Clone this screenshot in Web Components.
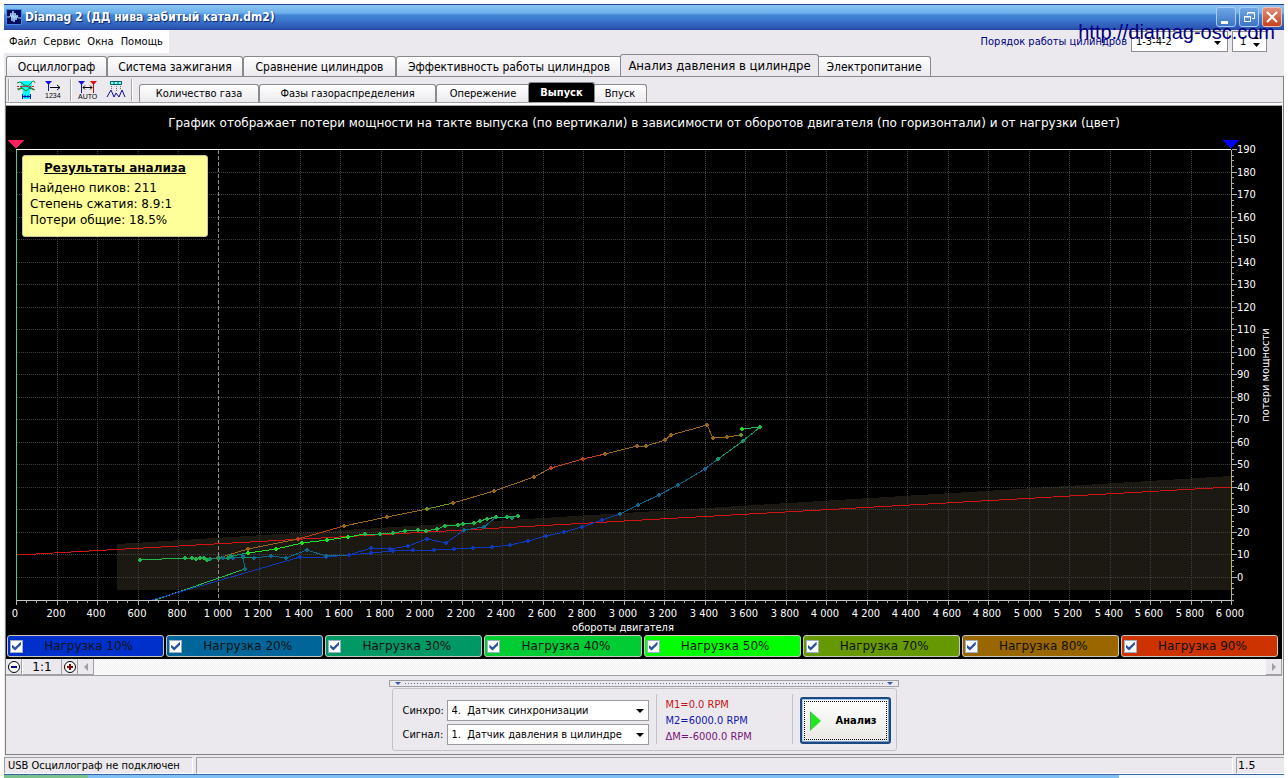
<!DOCTYPE html>
<html lang="ru">
<head>
<meta charset="utf-8">
<title>Diamag 2</title>
<style>
html { background: #fff; }
body { margin: 0; color: #000; font: 11px/16px "DejaVu Sans Condensed", "DejaVu Sans", sans-serif; --face: #ebe9ed; --line: #8a8a8e; --ui: "DejaVu Sans Condensed", "DejaVu Sans", sans-serif; --wide: "DejaVu Sans", sans-serif; }
</style>
</head>
<body>
<dm-app></dm-app>
<script>
const define = (name, html, setup) => {
  const tpl = document.createElement('template');
  tpl.innerHTML = '<style>*{box-sizing:border-box}button,select,input{font:inherit;color:inherit;margin:0}:host{display:block;box-sizing:border-box}</style>' + html;
  customElements.define(name, class extends HTMLElement {
    constructor() {
      super();
      this.attachShadow({ mode: 'open' }).append(tpl.content.cloneNode(true));
    }
    connectedCallback() {
      if (setup && !this.ready) { this.ready = true; setup(this, this.shadowRoot); }
    }
  });
};

define('dm-titlebar', `
<style>
:host { height: 26px; display: flex; align-items: center; gap: 3px; padding: 0 2px; border-top: 1px solid #1f4a94; border-bottom: 1px solid #24479b;
  background: linear-gradient(#8cc4f2 0, #6cb0ec 8px, #4585d6 10px, #3c7cd0 14px, #2e59b8 22px, #2c50ae 100%); }
h1 { flex: 1; margin: 0; color: #fff; font: bold 12px/20px "DejaVu Sans Condensed", sans-serif; text-shadow: 1px 1px 1px #0a246a; white-space: nowrap; }
.buttons { display: flex; gap: 3px; }
button { width: 20px; height: 20px; padding: 0; border: 1px solid #a9cdf3; border-radius: 3px; background: linear-gradient(#6fa6e4, #3c74c8); display: grid; place-items: center; }
button.close { background: linear-gradient(#e0907c, #c8401c); border-color: #f0c0b0; }
svg { display: block; }
</style>
<svg width="16" height="16" viewBox="0 0 16 16" aria-hidden="true"><rect width="16" height="16" fill="#4a86e8"/><rect x="1" y="1" width="14" height="14" fill="#000c5c"/><path d="M1 8h3l1-4 1 8 1-10 1 11 1-9 1 7 1-5 1 3h3" fill="none" stroke="#b4d8ff" stroke-width="1"/></svg>
<h1><slot></slot></h1>
<div class="buttons">
<button type="button" aria-label="Свернуть"><svg width="16" height="16"><path d="M3 12h7v3H3z" fill="#fff"/></svg></button>
<button type="button" aria-label="Восстановить"><svg width="16" height="16"><path d="M6.500 6V3.500h7v6H11M6 4h8" fill="none" stroke="#fff"/><path d="M3.500 7.500h6v5h-6zM3 8h7" fill="none" stroke="#fff"/></svg></button>
<button type="button" class="close" aria-label="Закрыть"><svg width="16" height="16"><path d="M3 3l10 10M13 3L3 13" stroke="#fff" stroke-width="2"/></svg></button>
</div>`);

define('dm-menubar', `
<style>
:host { display: flex; justify-content: space-between; align-items: flex-start; height: 24px; position: relative; }
nav { display: flex; gap: 7px; background: #fff; height: 23px; padding: 0 6px 0 5px; align-items: center; }
button { border: 0; background: none; padding: 0; line-height: 16px; }
form { display: flex; gap: 4px; margin: 1px 17px 0 0; height: 21px; align-items: center; }
label { color: #000080; }
.box { position: relative; height: 21px; }
.box svg { position: absolute; right: 6px; top: 0; pointer-events: none; }
select, input { height: 21px; border: 1px solid #8e8e92; background: #fff; padding: 0 8px 0 4px; border-radius: 0; appearance: none; display: block; }
select { width: 97px; } input { width: 35px; padding: 0 0 0 7px; appearance: textfield; }
input::-webkit-inner-spin-button { display: none; }
a { position: absolute; right: 9px; top: -10px; color: #000080; text-decoration: none; font: 20px/24px "Liberation Sans", sans-serif; }
</style>
<nav><button type="button">Файл</button><button type="button">Сервис</button><button type="button">Окна</button><button type="button">Помощь</button></nav>
<form><label for="o">Порядок работы цилиндров</label>
<div class="box"><select id="o"><option>1-3-4-2</option></select><svg width="8" height="21"><path d="M0 10h7l-3.500 4z"/></svg></div>
<div class="box"><input id="n" type="number" value="1" aria-label="Номер цилиндра"><svg width="8" height="21"><path d="M0 12h7l-3.500 4zM1 8h5L3.500 5z"/></svg></div></form>
<a href="http://diamag-osc.com">http://diamag-osc.com</a>`);

define('dm-tab', `
<style>
:host { flex: none; }
button { display: block; width: 100%; height: 100%; padding: 0; border: 1px solid var(--line); border-bottom: 0; border-radius: 3px 3px 0 0; background: linear-gradient(#fff, #ebe9ed); white-space: nowrap; }
:host([active]) { position: relative; margin: -2px -2px 0; }
:host([active]) button { background: var(--active, var(--face)); color: var(--active-ink, #000); font-weight: var(--active-weight, normal); font-size: var(--active-size, inherit); }
</style><button type="button" role="tab"><slot></slot></button>`, (host, root) => {
  host.style.width = host.getAttribute('width') + 'px';
  root.querySelector('button').setAttribute('aria-selected', host.hasAttribute('active'));
});

define('dm-tabs', `
<style>
:host { display: flex; align-items: stretch; height: 20px; }
</style><slot></slot>`);

define('dm-toolbar', `
<style>
:host { display: flex; align-items: center; height: 25px; }
i { width: 2px; height: 22px; background: #a2a2a6; border-right: 1px solid #fff; }
button { border: 0; padding: 0; background: none; display: block; }
svg { display: block; }
.a { display: flex; gap: 8px; padding: 0 8px 0 6px; }
.b { padding: 0 5px 0 6px; }
.g { margin-left: 2px; }
</style>
<i class="g"></i>
<div class="a">
<button type="button" aria-label="Фазы"><svg width="20" height="20"><path d="M5 1h11v7l-2 3v8H7v-8L5 8z" fill="#00ffff"/><path d="M1 3q3-2 5 0t4 3 5-3 4 0" fill="none" stroke="#008040"/><path d="M1 9q3 0 5-2t4-1 5 2 4 2" fill="none" stroke="#606060"/><path d="M1 6.500h18" stroke="#e02020" stroke-dasharray="2 1"/><path d="M2 10l4-2 4 3 4-3 4 2" stroke="#008000" fill="none"/><path d="M6.500 14v5M14.500 14v5M7 16.500h8M9 15v3M12 15v3" stroke="#0018c0"/></svg></button>
<button type="button" aria-label="Нумерация"><svg width="18" height="20"><path d="M1 1h7L4.500 5z" fill="#1010f0"/><path d="M4.500 4v7" stroke="#1010c0"/><path d="M6 7.500h10M13 5l3 2.500L13 10" fill="none" stroke="#000"/><text x="1" y="18" font-family="Liberation Sans" font-size="7">1234</text></svg></button>
</div><i></i>
<div class="a b">
<button type="button" aria-label="Авто"><svg width="20" height="20"><path d="M0 1h7L3.500 5z" fill="#1010f0"/><path d="M12 1h7l-3.500 4z" fill="#e01010"/><path d="M3.500 4v9" stroke="#1010c0"/><path d="M15.500 4v9" stroke="#c01010"/><path d="M5 7.500h9M7 5.500l-2 2 2 2M12 5.500l2 2-2 2" fill="none" stroke="#000"/><text x="0" y="19" font-family="Liberation Sans" font-size="7">AUTO</text></svg></button>
<button type="button" aria-label="Пики"><svg width="20" height="20"><path d="M4.500 1.500h11v3h-11z" fill="#80ffff" stroke="#006060"/><path d="M8 2v2M12 2v2" stroke="#006060"/><path d="M5.500 6v4M10.500 6v6M14.500 6v4" stroke="#707070" stroke-dasharray="1 1"/><path d="M1 17l4-7 3 7 2-4 3 4 3-7 3 7" fill="none" stroke="#101090"/></svg></button>
</div><i></i>
<slot></slot>`);

/* Losses chart. Points are kept in the units of the drawing's viewBox. */
const COLORS = { b: '#1038b8', t: '#106890', g: '#10986a', G: '#20b848', L: '#20e020', o: '#709818', a: '#986818', r: '#c04018' };
const SERIES = [
  'G155,600 L245,569', 'b152,600 b300,557 b326,557 b349,555 b371,553 b393,551 b413,550 b434,550 b454,549 b473,548 b492,547 b510,545 b528,541 b546,536 b564,532 b582,527 b602,520 t620,514 t638,505 t659,495 t678,485 t705,469 g718,459 g743,441 G760,427 L742,429',
  'b349,555 b371,548 b390,549 b408,546 b427,539 b446,543 t464,530 t484,527 t496,517 g512,518',
  't223,558 t233,558 g243,557 t254,558 t271,556 t286,558 t307,550 t326,556 b349,555',
  't243,556 t245,569',
  'a218,558 a248,549 r298,539 a344,526 a387,517 o427,509 a453,503 a494,491 a534,477 r551,468 r583,459 a605,454 a637,446 a646,446 a665,440 a671,435 a707,425 a713,438 a727,437 o741,435',
  'G140,560 G185,558 G192,558 G196,559 G200,558 G204,558 G207,560 g210,559 g219,558 g228,558 g231,556 L248,553 L276,549 L302,543 L327,540 L348,537 G365,534 G380,534 G393,533 G405,531 G418,530 G426,531 G437,529 G445,526 G458,525 G463,524 G474,523 G480,521 G487,519 G496,517 G507,517 G518,516'
];
define('dm-chart', `
<style>
:host { position: relative; background: #000; color: #fff; padding-top: 8px; }
h2 { margin: 0; text-align: center; font: 12px/18px var(--wide); }
svg { display: block; width: 100%; height: auto; font: 11px var(--ui); }
aside { position: absolute; left: 16px; top: 49px; width: 186px; height: 82px; padding: 4px 7px; border: 1px solid #c8c8a0; border-radius: 3px; background: #ffff99; color: #000; font: 12px/16px var(--wide); white-space: nowrap; }
h3 { margin: 0 0 4px; font: bold 12px/16px var(--wide); text-align: center; text-decoration: underline; }
p { margin: 0; }
</style>
<h2>График отображает потери мощности на такте выпуска (по вертикали) в зависимости от оборотов двигателя (по горизонтали) и от нагрузки (цвет)</h2>
<svg viewBox="6 132 1276 502" shape-rendering="crispEdges"></svg>
<aside><h3>Результаты анализа</h3><p>Найдено пиков: 211</p><p>Степень сжатия: 8.9:1</p><p>Потери общие: 18.5%</p></aside>`, (host, root) => {
  let s = '<path d="M117 544L1231 476V590H117z" fill="#1c1812"/>';
  const X = r => Math.round(16 + r * 0.2025), Y = v => Math.round(577 - v * 2.2526);
  let grid = '', tx = '', labels = '';
  for (let r = 0; r <= 6000; r += 50) {
    const x = X(r) + 0.5, major = r % 200 === 0;
    if (major) {
      if (r && r < 6000 && r !== 1000) grid += `M${x} 151V600`;
      labels += `<text x="${X(r) - 1}" y="617" text-anchor="middle">${r >= 1000 ? Math.floor(r / 1000) + ' ' + String(r % 1000).padStart(3, '0') : r}</text>`;
    }
    tx += `M${x} 600v${major ? 5 : 3}`;
  }
  for (let v = -10; v <= 190; v += 2.5) {
    const y = Y(v) + 0.5, major = v % 10 === 0 && v >= 0;
    if (major) {
      if (v < 190) grid += `M17 ${y}H1231`;
      labels += `<text x="1237" y="${Y(v) + 4}">${v}</text>`;
    }
    tx += `M1232 ${y}h${major ? 5 : 2}`;
  }
  s += `<path d="${grid}" stroke="#404040" stroke-dasharray="1 1" fill="none"/><path d="M218.500 150V600" stroke="#909090" stroke-dasharray="4 2"/>`;
  s += '<path d="M18 555L1231 487" stroke="#d01414" stroke-width="1"/>';
  let dots = '';
  SERIES.forEach((line, i) => {
    const pts = line.split(' ').map(p => [p[0], ...p.slice(1).split(',').map(Number)]);
    pts.forEach(([c, x, y], k) => {
      if (k) s += `<path d="M${pts[k - 1][1]} ${pts[k - 1][2]}L${x} ${y}" stroke="${COLORS[pts[k - 1][0]]}"/>`;
      if (y < 600 && !(i === 0)) dots += `<path d="M${x - 1} ${y - 2}h2v1h1v2h-1v1h-2v-1h-1v-2h1z" fill="${COLORS[c]}"/>`;
    });
  });
  s += dots + `<path d="M16 149.500H1231" stroke="#fff"/><path d="M16.500 150V600" stroke="#40c8a0"/><path d="M1231.500 150V600" stroke="#b8b860"/><path d="M16 600.500H1232" stroke="#c8c8c8"/><path d="${tx}" stroke="#b0b0b0"/>`;
  s += '<path d="M8 140h16l-8 9z" fill="#ff2060"/><path d="M1223 140h16l-8 9z" fill="#0000ff"/>';
  s += `<g fill="#fff">${labels}<text x="623" y="631" text-anchor="middle">обороты двигателя</text><text transform="translate(1269 375) rotate(-90)" text-anchor="middle">потери мощности</text></g>`;
  root.querySelector('svg').innerHTML = s;
});

define('dm-load', `
<style>
:host { display: block; min-width: 0; }
label { display: grid; grid-template-columns: 16px 1fr; align-items: center; height: 22px; padding: 0 12px 0 2px; border: 1px solid #c8c8b8; border-radius: 3px; background: var(--c); font: 12px/16px var(--wide); color: #101010; text-align: center; white-space: nowrap; }
input { appearance: none; width: 13px; height: 13px; background: #fff; border: 1px solid #9ab0c8; display: grid; place-items: center; }
input:checked::after { content: ""; width: 9px; height: 9px; background: #2a50a0; clip-path: polygon(0 35%, 35% 65%, 100% 0, 100% 35%, 35% 100%, 0 70%); }
</style><label><input type="checkbox" checked><span><slot></slot></span></label>`, host => host.style.setProperty('--c', host.getAttribute('color')));

define('dm-legend', `
<style>:host { display: grid; grid-template-columns: repeat(8, minmax(0, 1fr)); gap: 2px; background: #000; padding: 1px 4px 2px 1px; }</style><slot></slot>`);

define('dm-zoombar', `
<style>
:host { display: flex; height: 17px; border-bottom: 1px solid #a0a0a4; background: #fff; }
button, output { display: grid; place-items: center; width: 16px; height: 16px; padding: 0; border: 0; border-right: 1px solid #a0a0a4; border-bottom: 1px solid #a0a0a4; background: #ebe9ed; }
output { width: 40px; border-left: 1px solid #fff; font: 12px/14px var(--wide); }
.track { flex: 1; background: conic-gradient(#fff 25%, #efeef0 0 50%, #fff 0 75%, #efeef0 0) 0 0 / 2px 2px; }
svg { display: block; }
</style>
<button type="button" aria-label="Уменьшить"><svg width="14" height="14"><circle cx="7" cy="7" r="5.500" fill="#fff" stroke="#000"/><path d="M4 7h6" stroke="#000080" stroke-width="2"/></svg></button>
<output>1:1</output>
<button type="button" aria-label="Увеличить"><svg width="14" height="14"><circle cx="7" cy="7" r="5.500" fill="#fff" stroke="#000"/><path d="M4 7h6M7 4v6" stroke="#900000" stroke-width="2"/></svg></button>
<button type="button" aria-label="Влево"><svg width="14" height="14"><path d="M9 3v8L5 7z" fill="#a0a0a4"/></svg></button>
<div class="track"></div>
<button type="button" aria-label="Вправо"><svg width="14" height="14"><path d="M5 3v8l4-4z" fill="#a0a0a4"/></svg></button>`);

define('dm-panel', `
<style>
:host { display: flex; flex-direction: column; align-items: center; padding: 4px 0 3px; }
.split { display: flex; align-items: center; justify-content: space-between; width: 510px; height: 7px; padding: 0 5px; border: 1px solid #a0a0a4; }
.split i { border: 3px solid transparent; border-top: 3px solid #3058a0; border-bottom: 0; }
.split b { flex: 1; margin: 0 4px; height: 1px; background: repeating-linear-gradient(90deg, #5070b0 0 1px, transparent 1px 3px); }
.group { display: flex; width: 505px; height: 63px; margin-top: 1px; padding: 5px 5px 5px 10px; border: 1px solid #c4c2c8; border-radius: 3px; }
.fields { display: grid; grid-template-columns: 44px 202px; grid-auto-rows: 21px; gap: 3px 0; padding-top: 6px; align-items: center; }
.box { position: relative; }
.box svg { position: absolute; right: 5px; top: 0; pointer-events: none; }
select { display: block; width: 100%; height: 21px; appearance: none; border: 1px solid #9a9a9e; border-radius: 0; background: #fff; padding: 0 4px; white-space: pre; }
.marks { width: 137px; margin-left: 7px; padding: 3px 0 0 9px; border: solid #c4c2c8; border-width: 0 1px; height: 50px; }
.marks div { line-height: 16px; }
.run { width: 91px; height: 47px; margin: 3px 0 0 7px; padding: 2px; border: 2px solid #1c4880; border-radius: 3px; background: linear-gradient(#fff, #e8e8e2); font-weight: bold; box-shadow: inset -1px -1px #7ca0d0, inset 1px 1px #a0c8f0; }
.run span { display: flex; height: 39px; align-items: center; gap: 15px; padding-left: 5px; border: 1px dotted #000; }
</style>
<div class="split"><i></i><b></b><i></i></div>
<div class="group">
<div class="fields">
<label for="s">Синхро:</label><div class="box"><select id="s"><option>4.&nbsp; Датчик синхронизации</option></select><svg width="8" height="21"><path d="M0 9h8l-4 4z"/></svg></div>
<label for="g">Сигнал:</label><div class="box"><select id="g"><option>1.&nbsp; Датчик давления в цилиндре</option></select><svg width="8" height="21"><path d="M0 9h8l-4 4z"/></svg></div>
</div>
<div class="marks"><div style="color:#c81414">M1=0.0 RPM</div><div style="color:#1414b4">M2=6000.0 RPM</div><div style="color:#781478">ΔM=-6000.0 RPM</div></div>
<button class="run" type="button"><span><svg width="11" height="20"><path d="M0 0l11 10L0 20z" fill="#20e820"/><path d="M0.500 1v18" stroke="#60a060"/></svg>Анализ</span></button>
</div>`);

define('dm-status', `
<style>
:host { display: grid; grid-template-columns: 189px 1fr 48px; gap: 3px; height: 17px; margin-top: 2px; }
span { border: 1px solid #a0a0a4; border-right-color: #fff; border-bottom-color: #fff; padding: 0 3px; line-height: 15px; white-space: nowrap; }
.v { font: 11px/15px var(--wide); padding: 0 1px; border-right: 0; }
</style><span>USB Осциллограф не подключен</span><span></span><span class="v">1.5</span>`);

define('dm-app', `
<style>
:host { padding: 4px 4px 0; }
main { background: var(--face); }
.top { padding: 2px 0 0 2px; font-size: 12px; --active-size: 13px; }
.page { margin-left: 1px; padding-right: 1px; border: 1px solid #808084; border-top-color: var(--line); }
.sub { --active: #000; --active-ink: #fff; --active-weight: bold; --active-size: 11px; font-size: 11px; margin-left: 6px; align-self: flex-end; }
dm-tabs.top { height: 22px; }
dm-tabs.sub { height: 18px; }
.rule { height: 4px; border: solid #a0a0a4; border-width: 1px 0; background: #fff; }
.task { height: 4px; border-top: 1px solid #3868a8; background: linear-gradient(90deg, #7cc08c 0 84px, #80c0f4 84px 1115px, #f0faff 1115px); }
</style>
<main>
<dm-titlebar>Diamag 2 (ДД нива забитый катал.dm2)</dm-titlebar>
<dm-menubar></dm-menubar>
<dm-tabs class="top" role="tablist">
<dm-tab width="101">Осциллограф</dm-tab><dm-tab width="136">Система зажигания</dm-tab><dm-tab width="153">Сравнение цилиндров</dm-tab><dm-tab width="226">Эффективность работы цилиндров</dm-tab><dm-tab width="199" active>Анализ давления в цилиндре</dm-tab><dm-tab width="114">Электропитание</dm-tab>
</dm-tabs>
<div class="page">
<dm-toolbar><dm-tabs class="sub" role="tablist">
<dm-tab width="120">Количество газа</dm-tab><dm-tab width="177">Фазы газораспределения</dm-tab><dm-tab width="94">Опережение</dm-tab><dm-tab width="67" active>Выпуск</dm-tab><dm-tab width="54">Впуск</dm-tab>
</dm-tabs></dm-toolbar>
<div class="rule"></div>
<dm-chart></dm-chart>
<dm-legend>
<dm-load color="#0030cc">Нагрузка 10%</dm-load><dm-load color="#006699">Нагрузка 20%</dm-load><dm-load color="#009966">Нагрузка 30%</dm-load><dm-load color="#00cc33">Нагрузка 40%</dm-load><dm-load color="#00ff00">Нагрузка 50%</dm-load><dm-load color="#669900">Нагрузка 70%</dm-load><dm-load color="#996600">Нагрузка 80%</dm-load><dm-load color="#cc3300">Нагрузка 90%</dm-load>
</dm-legend>
<dm-zoombar></dm-zoombar>
<dm-panel></dm-panel>
</div>
<dm-status></dm-status>
<div class="task"></div>
</main>`);
</script>
</body>
</html>
